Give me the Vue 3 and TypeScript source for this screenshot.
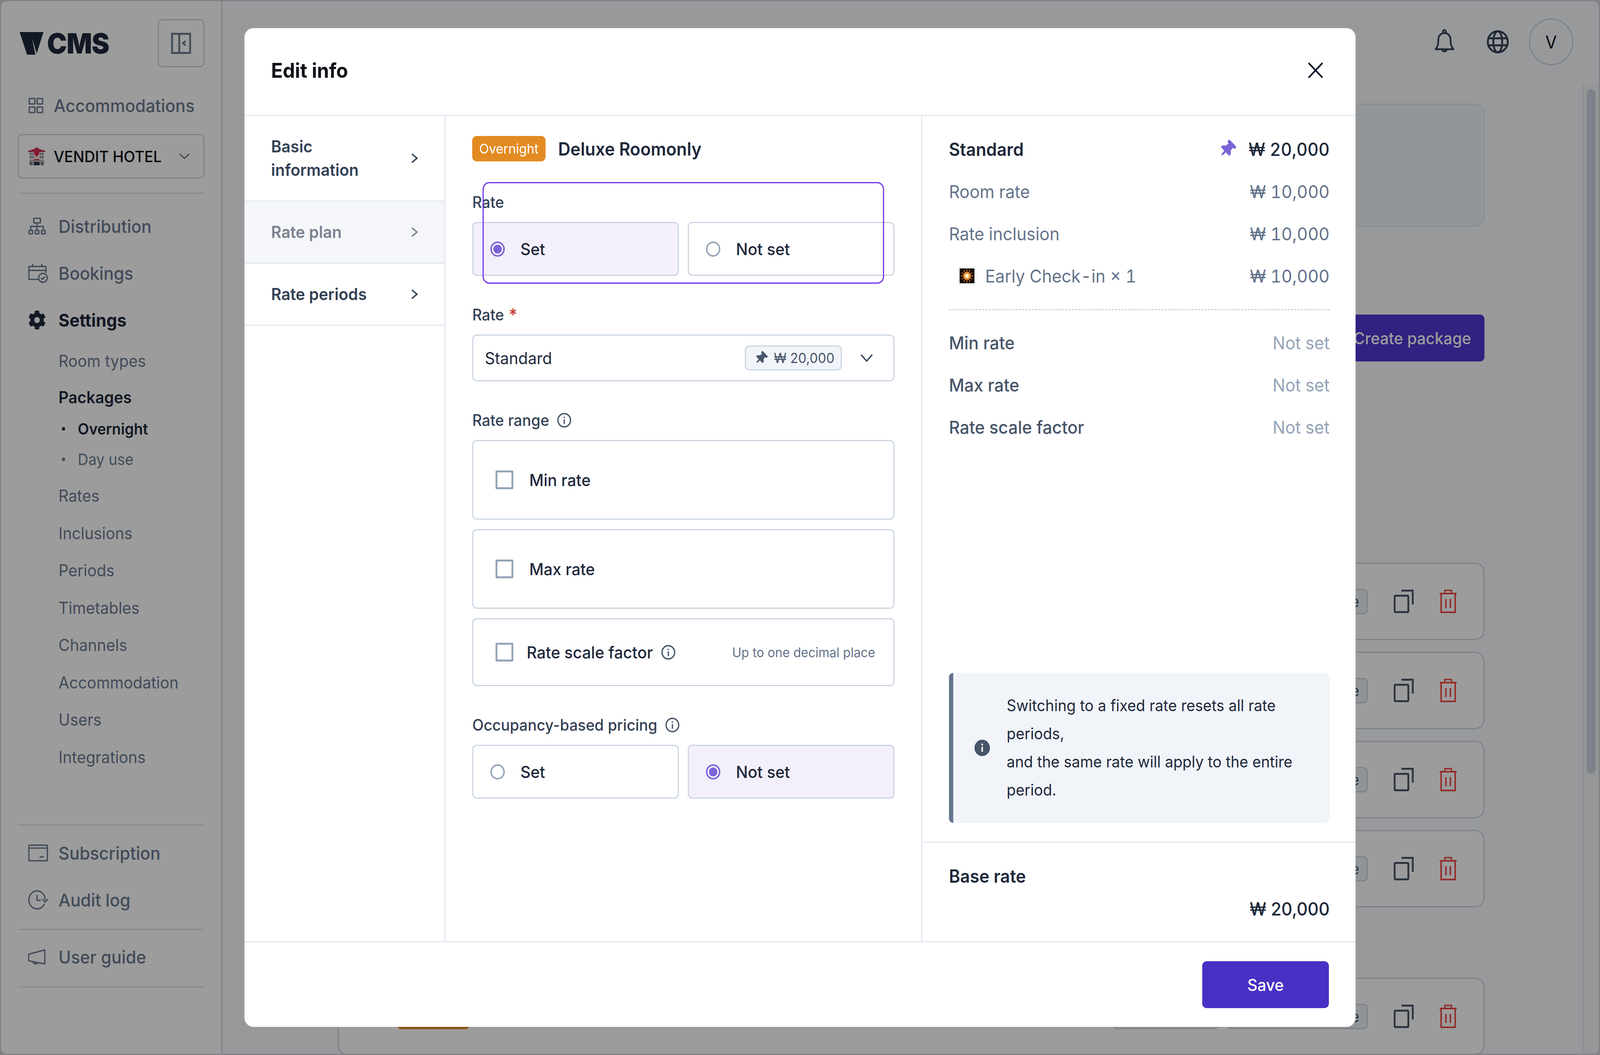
<script setup lang="ts">
// The design is 4320 wide. The sandbox window can be narrower (4096 when probed),
// so squeeze the width to fit instead of cutting off the right edge. 1 at 4320.
const fitX = window.innerWidth / 4320

const subItems = ['Rates', 'Inclusions', 'Periods', 'Timetables', 'Channels', 'Accommodation', 'Users', 'Integrations']
const rateRows = [
  { label: 'Room rate', value: '₩ 10,000' },
  { label: 'Rate inclusion', value: '₩ 10,000' },
]
const limitRows = ['Min rate', 'Max rate', 'Rate scale factor']
const navItems = [
  { label: 'Basic information', active: false },
  { label: 'Rate plan', active: true },
  { label: 'Rate periods', active: false },
]
const rangeBoxes = ['Min rate', 'Max rate']
const PIN = 'M298 214L286 96H328c13 0 24-11 24-24V24c0-13-11-24-24-24H56C43 0 32 11 32 24v48c0 13 11 24 24 24h42L86 214C37 237 0 277 0 328c0 13 11 24 24 24h136v104c0 1 0 2 1 4l24 48c3 6 11 6 14 0l24-48c1-2 1-3 1-4V352h136c13 0 24-11 24-24 0-51-38-91-86-114z'
const GEAR = 'M487.4 315.7l-42.6-24.6c4.3-23.2 4.3-47 0-70.2l42.6-24.6c4.9-2.8 7.1-8.6 5.5-14-11.1-35.6-30-67.8-54.7-94.6-3.8-4.1-10-5.1-14.8-2.3L380.8 110c-17.9-15.4-38.5-27.3-60.8-35.1V25.8c0-5.6-3.9-10.5-9.4-11.7-36.7-8.2-74.3-7.8-109.2 0-5.5 1.2-9.4 6.1-9.4 11.7V75c-22.2 7.9-42.8 19.8-60.8 35.1L88.7 85.5c-4.9-2.8-11-1.9-14.8 2.3-24.7 26.7-43.6 58.9-54.7 94.6-1.7 5.4.6 11.2 5.5 14L67.3 221c-4.3 23.2-4.3 47 0 70.2l-42.6 24.6c-4.9 2.8-7.1 8.6-5.5 14 11.1 35.6 30 67.8 54.7 94.6 3.8 4.1 10 5.1 14.8 2.3l42.6-24.6c17.9 15.4 38.5 27.3 60.8 35.1v49.2c0 5.6 3.9 10.5 9.4 11.7 36.7 8.2 74.3 7.8 109.2 0 5.5-1.2 9.4-6.1 9.4-11.7v-49.2c22.2-7.9 42.8-19.8 60.8-35.1l42.6 24.6c4.9 2.8 11 1.9 14.8-2.3 24.7-26.7 43.6-58.9 54.7-94.6 1.5-5.5-.7-11.3-5.6-14.1zM256 336c-44.1 0-80-35.9-80-80s35.9-80 80-80 80 35.9 80 80-35.9 80-80 80z'
const rays = [0, 30, 60, 90, 120, 150, 180, 210, 240, 270, 300, 330]
</script>

<template>
  <div class="frame">
    <div class="screen" :style="{ transform: `scaleX(${fitX})` }">
      <div class="app">
        <aside class="sidebar">
          <div class="brand">
            <div class="logo">
              <svg class="logo__mark" width="65" height="58" viewBox="0 0 65 58">
                <path d="M0 0H64.500L46 55L33 14L42.500 58H20Z" fill="#1e293b" />
              </svg>
              <span class="logo__text">CMS</span>
            </div>
            <button class="collapse">
              <svg width="54" height="54" viewBox="0 0 54 54" fill="none" stroke="#6b7b92" stroke-width="5">
                <rect x="2.500" y="2.500" width="49" height="49" />
                <path d="M22 2V52" />
                <path d="M39 21L32 26.500L39 32" stroke-width="4.500" />
              </svg>
            </button>
          </div>

          <div class="top-link">
            <svg width="40" height="40" viewBox="0 0 40 40" fill="none" stroke="#6b7b92" stroke-width="3.500">
              <rect x="2" y="2" width="15" height="14" rx="1" />
              <rect x="23" y="2" width="15" height="14" rx="1" />
              <rect x="2" y="24" width="15" height="14" rx="1" />
              <rect x="23" y="24" width="15" height="14" rx="1" />
            </svg>
            <span>Accommodations</span>
          </div>

          <div class="hotel">
            <svg class="hotel__icon" width="46" height="47" viewBox="0 0 46 47">
              <rect x="3" y="9" width="40" height="36" fill="#e9d7dc" />
              <path d="M0 9L14 5L23 0L32 5L46 9V12H0Z" fill="#c9344d" />
              <path d="M23 24C14 17 14 9 19 9C21 9 23 11 23 12C23 11 25 9 27 9C32 9 32 17 23 24Z" fill="#e0244a" />
              <path d="M5 15h4v4H5zM11 15h3v4h-3zM32 15h3v4h-3zM37 15h4v4h-4zM5 23h4v4H5zM11 23h3v4h-3zM32 23h3v4h-3zM37 23h4v4h-4z" fill="#5f7486" />
              <path d="M3 33H43V36H3Z" fill="#b9a7ac" />
              <path d="M15 37H31V46H15Z" fill="#27384a" />
              <path d="M13 33C16 29 30 29 33 33Z" fill="#c9344d" />
              <path d="M4 37h8v9H4zM34 37h8v9h-8z" fill="#70868f" />
            </svg>
            <span class="hotel__name">VENDIT HOTEL</span>
            <svg width="30" height="18" viewBox="0 0 30 18" fill="none" stroke="#6b7b92" stroke-width="3.500">
              <path d="M2 3L15 14L28 3" />
            </svg>
          </div>

          <hr class="rule rule--first" />

          <nav class="menu">
            <div class="menu__row">
              <svg width="48" height="45" viewBox="0 0 48 45" fill="none" stroke="#6b7b92" stroke-width="3.500">
                <rect x="15" y="2" width="18" height="12" rx="1.500" />
                <path d="M24 14V23M7 32V23H41V32M24 23V32" />
                <rect x="2" y="33" width="10" height="9" rx="2" />
                <rect x="19" y="33" width="10" height="9" rx="2" />
                <rect x="36" y="33" width="10" height="9" rx="2" />
              </svg>
              <span>Distribution</span>
            </div>
            <div class="menu__row">
              <svg width="54" height="52" viewBox="0 0 54 52" fill="none" stroke="#6b7b92" stroke-width="3.500">
                <path d="M28 42H2V9H48V25M2 19H48M12 2V11M37 2V11" />
                <circle cx="40" cy="38" r="11.500" />
                <path d="M34.500 38L38.500 42L45.500 35" />
              </svg>
              <span>Bookings</span>
            </div>
            <div class="menu__row menu__row--on">
              <svg width="48" height="50" viewBox="0 0 512 512" fill="#1e293b" preserveAspectRatio="none">
                <path :d="GEAR" />
              </svg>
              <span>Settings</span>
            </div>
            <div class="sub sub--room">Room types</div>
            <div class="sub sub--pack">Packages</div>
            <div class="leaf leaf--on"><i class="leaf__dot"></i>Overnight</div>
            <div class="leaf leaf--off"><i class="leaf__dot"></i>Day use</div>
            <div v-for="item in subItems" :key="item" class="sub">{{ item }}</div>
          </nav>

          <hr class="rule rule--foot" />
          <div class="menu__row">
            <svg width="54" height="44" viewBox="0 0 54 44" fill="none" stroke="#6b7b92" stroke-width="3.500">
              <rect x="2" y="2" width="50" height="40" rx="2" />
              <path d="M2 9.500H52" stroke-width="3" />
              <path d="M31 32H42" />
            </svg>
            <span>Subscription</span>
          </div>
          <div class="menu__row">
            <svg width="54" height="50" viewBox="0 0 54 50" fill="none" stroke="#6b7b92" stroke-width="3.500">
              <path d="M46 25C46 12 36 2 24 2C12 2 2 12 2 25C2 38 12 48 24 48C33 48 40 43 44 35" />
              <path d="M24 12V26H34" />
              <path d="M38 23L46 30L53 23" />
            </svg>
            <span>Audit log</span>
          </div>
          <hr class="rule rule--mid" />
          <div class="menu__row">
            <svg width="48" height="42" viewBox="0 0 48 42" fill="none" stroke="#6b7b92" stroke-width="3.500">
              <path d="M45 3V39L2 31C1 28 1 17 2 14L45 3Z" stroke-linejoin="round" />
              <path d="M13 33C14 40 24 41 26 35" />
            </svg>
            <span>User guide</span>
          </div>
          <hr class="rule rule--last" />
        </aside>

        <div class="main">
          <header class="topbar">
            <svg width="72" height="72" viewBox="0 0 24 24" fill="none" stroke="#334155" stroke-width="1.500" stroke-linejoin="round">
              <path d="M12 4.500a5.500 5.500 0 0 0-5.500 5.500c0 4.500-.8 6.300-2.500 8.300h16c-1.700-2-2.500-3.800-2.500-8.300A5.500 5.500 0 0 0 12 4.500Z" />
              <circle cx="12" cy="3.300" r="1.300" />
              <path d="M9.800 18.500a2.300 2.300 0 0 0 4.400 0" />
            </svg>
            <svg width="72" height="72" viewBox="0 0 72 72" fill="none" stroke="#334155" stroke-width="5">
              <circle cx="36" cy="36" r="27" />
              <ellipse cx="36" cy="36" rx="12" ry="27" />
              <path d="M9 27H63M9 45H63" />
            </svg>
            <div class="avatar">V</div>
          </header>
          <div class="scroll">
            <div class="content">
              <div class="summary"></div>
              <div class="actions"><button class="create">Create package</button></div>
              <div class="cards">
                <div v-for="n in 5" :key="n" class="card" :class="{ 'card--last': n === 5 }">
                  <span class="card__badge"></span>
                  <span class="card__btn card__btn--wide"></span>
                  <span class="card__btn">e</span>
                  <svg width="54" height="60" viewBox="0 0 54 60" fill="none" stroke="#4b5869" stroke-width="5">
                    <rect x="2.500" y="15.500" width="37" height="42" rx="2" />
                    <path d="M21 2.500H51.500V38" />
                  </svg>
                  <svg width="46" height="60" viewBox="0 0 46 60" fill="none" stroke="#ef4444" stroke-width="4">
                    <path d="M0 10H46" />
                    <path d="M14 10V2H32V10" stroke-width="3.500" />
                    <path d="M4 10V58H42V10" />
                    <path d="M17 24V47M29 24V47" />
                  </svg>
                </div>
              </div>
            </div>
            <div class="track"><div class="track__thumb"></div></div>
          </div>
        </div>
      </div>

      <div class="overlay">
        <section class="modal">
          <header class="modal__head">
            <h2 class="modal__title">Edit info</h2>
            <svg width="40" height="40" viewBox="0 0 40 40" fill="none" stroke="#0f172a" stroke-width="4.500" stroke-linecap="round">
              <path d="M2.500 2.500L37.500 37.500M37.500 2.500L2.500 37.500" />
            </svg>
          </header>

          <div class="modal__body">
            <div class="steps">
              <div v-for="item in navItems" :key="item.label" class="step" :class="{ 'step--on': item.active }">
                <span class="step__label">{{ item.label }}</span>
                <svg width="24" height="30" viewBox="0 0 24 30" fill="none" stroke="currentColor" stroke-width="3.500">
                  <path d="M5 4L19 15L5 26" />
                </svg>
              </div>
            </div>

            <div class="form">
              <div class="form__title">
                <span class="tag">Overnight</span>
                <span class="form__name">Deluxe Roomonly</span>
              </div>

              <div class="field field--rate">
                <label class="label">Rate</label>
                <div class="choices">
                  <div class="choice choice--on"><i class="radio radio--on"></i>Set</div>
                  <div class="choice"><i class="radio"></i>Not set</div>
                </div>
                <div class="focus-ring"></div>
              </div>

              <div class="field">
                <label class="label">Rate <em class="label__req">*</em></label>
                <div class="select">
                  <span class="select__value">Standard</span>
                  <span class="chip">
                    <svg width="25" height="33" viewBox="0 0 384 512" fill="#475569" class="pin pin--chip">
                      <path :d="PIN" />
                    </svg>
                    ₩ 20,000
                  </span>
                  <svg class="select__caret" width="34" height="22" viewBox="0 0 34 22" fill="none" stroke="#334155" stroke-width="3.500">
                    <path d="M2 3L17 19L32 3" />
                  </svg>
                </div>
              </div>

              <div class="field">
                <label class="label">
                  Rate range
                  <svg class="info" width="39" height="39" viewBox="0 0 39 39" fill="none" stroke="#475569" stroke-width="3.500">
                    <circle cx="19.500" cy="19.500" r="17" />
                    <path d="M19.500 17V29" />
                    <path d="M19.500 10.500V13.500" stroke-width="4" />
                  </svg>
                </label>
                <div class="ranges">
                  <div v-for="box in rangeBoxes" :key="box" class="range">
                    <i class="check"></i>
                    <span>{{ box }}</span>
                  </div>
                  <div class="range range--scale">
                    <i class="check"></i>
                    <span>Rate scale factor</span>
                    <svg class="info" width="39" height="39" viewBox="0 0 39 39" fill="none" stroke="#475569" stroke-width="3.500">
                      <circle cx="19.500" cy="19.500" r="17" />
                      <path d="M19.500 17V29" />
                      <path d="M19.500 10.500V13.500" stroke-width="4" />
                    </svg>
                    <span class="range__hint">Up to one decimal place</span>
                  </div>
                </div>
              </div>

              <div class="field">
                <label class="label">
                  Occupancy-based pricing
                  <svg class="info" width="39" height="39" viewBox="0 0 39 39" fill="none" stroke="#475569" stroke-width="3.500">
                    <circle cx="19.500" cy="19.500" r="17" />
                    <path d="M19.500 17V29" />
                    <path d="M19.500 10.500V13.500" stroke-width="4" />
                  </svg>
                </label>
                <div class="choices">
                  <div class="choice"><i class="radio"></i>Set</div>
                  <div class="choice choice--on"><i class="radio radio--on"></i>Not set</div>
                </div>
              </div>
            </div>

            <div class="review">
              <div class="review__pane">
                <div class="line line--head">
                  <span>Standard</span>
                  <span class="line__price">
                    <svg width="33" height="44" viewBox="0 0 384 512" fill="#7c63d8" class="pin pin--line">
                      <path :d="PIN" />
                    </svg>
                    ₩ 20,000
                  </span>
                </div>
                <div v-for="row in rateRows" :key="row.label" class="line">
                  <span>{{ row.label }}</span>
                  <span>{{ row.value }}</span>
                </div>
                <div class="line">
                  <span class="line__item">
                    <svg class="spark" width="48" height="48" viewBox="0 0 48 48">
                      <rect x="0.500" y="0.500" width="47" height="47" fill="#fff" stroke="#e2e8f0" />
                      <rect x="4" y="5" width="40" height="38" fill="#120a08" />
                      <g stroke="#e8701f" stroke-width="2">
                        <path v-for="deg in rays" :key="deg" d="M24 24V7" :transform="`rotate(${deg} 24 24)`" />
                      </g>
                      <circle cx="24" cy="24" r="10" fill="#f59a3c" />
                      <circle cx="24" cy="24" r="5" fill="#fff3d6" />
                    </svg>
                    Early Check-in × 1
                  </span>
                  <span>₩ 10,000</span>
                </div>
                <hr class="dash" />
                <div v-for="row in limitRows" :key="row" class="line line--limit">
                  <span>{{ row }}</span>
                  <span class="line__none">Not set</span>
                </div>
                <div class="notice">
                  <svg width="42" height="42" viewBox="0 0 42 42" class="notice__icon">
                    <circle cx="21" cy="21" r="21" fill="#475569" />
                    <rect x="19" y="18" width="4" height="13" rx="1" fill="#fff" />
                    <rect x="19" y="10" width="4" height="5" rx="1" fill="#fff" />
                  </svg>
                  <p class="notice__text">
                    Switching to a fixed rate resets all rate<br />
                    periods,<br />
                    and the same rate will apply to the entire<br />
                    period.
                  </p>
                </div>
              </div>
              <div class="base">
                <div class="base__label">Base rate</div>
                <div class="base__value">₩ 20,000</div>
              </div>
            </div>
          </div>

          <footer class="modal__foot">
            <button class="save">Save</button>
          </footer>
        </section>
      </div>
    </div>
  </div>
</template>

<style>
html,
body {
  margin: 0;
  background: #fff;
  overflow: hidden;
}
</style>

<style scoped>
* {
  box-sizing: border-box;
}

.frame {
  width: 100vw;
  height: 100vh;
  overflow: hidden;
}

.screen {
  position: relative;
  width: 4320px;
  height: 2700px;
  overflow: hidden;
  background: #d1d5db;
  font-family: Inter, "Liberation Sans", sans-serif;
  color: #1e293b;
  transform-origin: left top;
}

.app {
  display: flex;
  width: 100%;
  height: 100%;
  overflow: hidden;
  border: 3px solid #d1d5db;
  border-radius: 18px;
  background: #f9fafd;
}

/* sidebar */
.sidebar {
  display: flex;
  flex-direction: column;
  flex: none;
  width: 597px;
  padding: 46px 45px 0;
  background: #fff;
  border-right: 3px solid #cbd5e1;
}

.brand {
  display: flex;
  align-items: center;
  justify-content: space-between;
  height: 123px;
}

.logo {
  display: flex;
  align-items: center;
  gap: 9px;
  padding-left: 5px;
}

.logo__mark {
  display: block;
}

.logo__text {
  font-size: 72px;
  font-weight: 900;
  line-height: 60px;
  color: #1e293b;
  letter-spacing: -1px;
}

.collapse {
  display: flex;
  align-items: center;
  justify-content: center;
  width: 126px;
  height: 123px;
  padding: 0;
  background: none;
  border: 3px solid #cbd5e1;
  border-radius: 12px;
}

.top-link {
  display: flex;
  align-items: center;
  gap: 28px;
  height: 96px;
  margin-top: 50px;
  padding-left: 29px;
  font-size: 45.500px;
  font-weight: 500;
  color: #6b7b92;
}

.hotel {
  display: flex;
  align-items: center;
  height: 114px;
  margin-top: 25px;
  padding: 0 36px 0 25px;
  border: 3px solid #cbd5e1;
  border-radius: 12px;
}

.hotel__icon {
  flex: none;
}

.hotel__name {
  flex: 1;
  margin-left: 23px;
  font-size: 40px;
  font-weight: 500;
  color: #0b0f18;
}

.rule {
  flex: none;
  width: 100%;
  height: 3px;
  margin: 0;
  border: 0;
  background: #dde3ea;
}

.rule--first {
  margin: 36px 0 23px;
}

.rule--foot {
  margin: 125px 0 10px;
}

.rule--mid {
  margin: 14px 0 9px;
}

.rule--last {
  margin-top: 15px;
}

.menu {
  display: flex;
  flex-direction: column;
}

.menu__row {
  position: relative;
  display: flex;
  align-items: center;
  flex: none;
  height: 120px;
  padding-left: 110px;
  font-size: 45.500px;
  font-weight: 500;
  color: #6b7b92;
}

.menu__row svg {
  position: absolute;
  left: 28px;
  top: 50%;
  transform: translateY(-50%);
}

.menu__row--on {
  font-weight: 700;
  color: #1e293b;
}

.sub {
  display: flex;
  align-items: center;
  height: 95.500px;
  padding-left: 110px;
  font-size: 42px;
  color: #6b7b92;
}

.sub--room {
  height: 88px;
}

.sub--pack {
  height: 98px;
  font-weight: 600;
  color: #1e293b;
}

.leaf {
  position: relative;
  display: flex;
  align-items: center;
  padding-left: 162px;
  font-size: 39.500px;
  color: #6b7b92;
}

.leaf--on {
  height: 66px;
  font-weight: 600;
  color: #1e293b;
}

.leaf--off {
  height: 90px;
}

.leaf__dot {
  position: absolute;
  left: 119px;
  top: 50%;
  width: 9px;
  height: 9px;
  margin-top: -5px;
  border-radius: 50%;
  background: currentColor;
}

/* main page under the dialog */
.main {
  display: flex;
  flex: 1;
  flex-direction: column;
  min-width: 0;
}

.topbar {
  display: flex;
  align-items: center;
  justify-content: flex-end;
  flex: none;
  gap: 72px;
  height: 213px;
  padding: 0 69px 5px 0;
}

.avatar {
  display: flex;
  align-items: center;
  justify-content: center;
  width: 120px;
  height: 120px;
  margin-left: -24px;
  border: 3px solid #cbd5e1;
  border-radius: 50%;
  font-size: 45px;
  color: #0b0f18;
}

.scroll {
  display: flex;
  flex: 1;
  min-height: 0;
}

.content {
  flex: 1;
  min-width: 0;
  padding: 49px 265px 0 312px;
}

.summary {
  height: 315px;
  background: #f1f5f9;
  border: 3px solid #e2e8f0;
  border-radius: 24px;
}

.actions {
  display: flex;
  justify-content: flex-end;
  margin-top: 225px;
}

.create {
  height: 120px;
  padding: 0 36px;
  background: #4d38d1;
  border: 0;
  border-radius: 12px;
  font: 500 42px Inter, sans-serif;
  color: #fff;
}

.cards {
  display: flex;
  flex-direction: column;
  gap: 30px;
  margin-top: 515px;
}

.card {
  display: flex;
  align-items: center;
  flex: none;
  height: 198px;
  padding: 0 72px 0 157px;
  background: #fff;
  border: 3px solid #cbd5e1;
  border-radius: 24px;
}

.card--last {
  margin-top: 150px;
}

.card__badge {
  width: 196px;
  height: 65px;
  margin-right: auto;
  background: #e38b22;
  border-radius: 12px;
}

.card__btn {
  display: flex;
  align-items: center;
  justify-content: flex-end;
  width: 381px;
  height: 65px;
  padding-right: 20px;
  margin-right: 70px;
  background: #eef2f7;
  border: 3px solid #cbd5e1;
  border-radius: 12px;
  font-size: 39px;
  color: #475569;
}

.card__btn--wide {
  width: 283px;
  margin-right: 23px;
}

.card svg + svg {
  margin-left: 70px;
}

.track {
  flex: none;
  width: 44px;
  padding: 12px 9px 0 8px;
  background: #f3f5f8;
  border-left: 3px solid #e2e8f0;
}

.track__thumb {
  width: 24px;
  height: 1751px;
  border-radius: 12px;
  background: #cbd5e1;
}

/* dialog */
.overlay {
  position: absolute;
  inset: 0;
  display: flex;
  align-items: center;
  justify-content: center;
  background: rgba(0, 0, 0, 0.39);
}

.modal {
  display: flex;
  flex-direction: column;
  width: 3000px;
  height: 2556px;
  background: #fff;
  border-radius: 24px;
  overflow: hidden;
}

.modal__head {
  display: flex;
  align-items: center;
  justify-content: space-between;
  flex: none;
  height: 225px;
  padding: 0 88px 6px 72px;
  border-bottom: 3px solid #e2e8f0;
}

.modal__title {
  margin: 0;
  font-size: 52px;
  font-weight: 700;
  color: #0f1218;
}

.modal__body {
  display: flex;
  flex: 1;
  min-height: 0;
}

.steps {
  flex: none;
  width: 543px;
  border-right: 3px solid #e2e8f0;
}

.step {
  display: flex;
  align-items: center;
  justify-content: space-between;
  padding: 48px 69px 48px 72px;
  border-bottom: 3px solid #e2e8f0;
  font-size: 42.500px;
  font-weight: 600;
  line-height: 60px;
  color: #334155;
}

.step__label {
  width: 300px;
}

.step--on {
  background: #f5f6f9;
  color: #7b8290;
}

.form {
  flex: none;
  width: 1287px;
  padding: 51px 72px 0;
  border-right: 3px solid #e2e8f0;
}

.form__title {
  display: flex;
  align-items: center;
  gap: 34px;
}

.tag {
  display: flex;
  align-items: center;
  justify-content: center;
  width: 198px;
  height: 65px;
  background: #e38b22;
  border-radius: 12px;
  font-size: 34.500px;
  color: #fff;
}

.form__name {
  font-size: 46px;
  font-weight: 600;
  color: #1e293b;
}

.field {
  position: relative;
  margin-top: 69px;
}

.field--rate {
  margin-top: 74px;
}

.label {
  display: flex;
  align-items: center;
  gap: 21px;
  height: 60px;
  margin-bottom: 21px;
  font-size: 40.300px;
  font-weight: 500;
  color: #334155;
}

.label__req {
  margin-left: -8px;
  font-style: normal;
  font-size: 44px;
  color: #c0392b;
}

.choices {
  display: grid;
  grid-template-columns: 1fr 1fr;
  gap: 24px;
}

.choice {
  display: flex;
  align-items: center;
  gap: 42px;
  height: 138px;
  padding-left: 46px;
  background: #fff;
  border: 3px solid #cbd5e1;
  border-radius: 12px;
  font-size: 42.500px;
  font-weight: 500;
  color: #1e293b;
}

.choice--on {
  background: #f3f0fc;
}

.radio {
  flex: none;
  width: 39px;
  height: 39px;
  border: 4px solid #94a3b8;
  border-radius: 50%;
  background: #fff;
}

.radio--on {
  border-color: #7c63d8;
  background: #7c63d8;
  box-shadow: inset 0 0 0 4px #fff;
}

.focus-ring {
  position: absolute;
  left: 28px;
  top: -21px;
  width: 1084px;
  height: 260px;
  border: 3px solid #6c2fe0;
  border-radius: 18px;
  pointer-events: none;
}

.select {
  display: flex;
  align-items: center;
  height: 120px;
  padding: 0 55px 0 31px;
  border: 3px solid #cbd5e1;
  border-radius: 12px;
  font-size: 42.500px;
  color: #1e293b;
}

.select__value {
  flex: 1;
}

.chip {
  display: flex;
  align-items: center;
  gap: 17px;
  height: 64px;
  padding: 0 17px 0 23px;
  background: #f1f5f9;
  border: 3px solid #cbd5e1;
  border-radius: 12px;
  font-size: 35.500px;
  color: #475569;
}

.pin {
  flex: none;
  transform: rotate(45deg);
}

.pin--chip {
  margin: 0 5px;
}

.pin--line {
  margin: 0 7px;
}

.select__caret {
  margin-left: 50px;
}

.ranges {
  display: flex;
  flex-direction: column;
  gap: 24px;
}

.range {
  display: flex;
  align-items: center;
  gap: 43px;
  height: 204px;
  padding: 0 49px 0 60px;
  border: 3px solid #cbd5e1;
  border-radius: 12px;
  font-size: 42.500px;
  font-weight: 500;
  color: #1e293b;
}

.range--scale {
  gap: 36px;
  height: 174px;
}

.range--scale .info {
  margin-left: -14px;
}

.range__hint {
  margin-left: auto;
  font-size: 33.800px;
  font-weight: 400;
  color: #64748b;
}

.check {
  flex: none;
  width: 48px;
  height: 48px;
  border: 5px solid #94a3b8;
  border-radius: 3px;
  background: #fff;
}

.review {
  display: flex;
  flex: 1;
  flex-direction: column;
  min-width: 0;
}

.review__pane {
  display: flex;
  flex: 1;
  flex-direction: column;
  padding: 31px 70px 48px 72px;
  border-bottom: 3px solid #e2e8f0;
}

.line {
  display: flex;
  align-items: center;
  justify-content: space-between;
  flex: none;
  height: 108px;
  font-size: 45.500px;
  font-variant-numeric: tabular-nums;
  color: #64748b;
}

.line--head {
  font-size: 46px;
  font-weight: 600;
  color: #1e293b;
}

.line--limit {
  font-weight: 500;
  color: #475569;
}

.line__price {
  display: flex;
  align-items: center;
  gap: 34px;
  font-weight: 500;
}

.line__item {
  display: flex;
  align-items: center;
  gap: 25px;
  padding-left: 25px;
}

.line__none {
  font-weight: 400;
  color: #94a3b8;
}

.dash {
  flex: none;
  width: 100%;
  height: 0;
  margin: 31px 0 29px;
  border: 0;
  border-top: 3px dashed #cbd5e1;
}

.notice {
  display: flex;
  align-items: center;
  gap: 45px;
  margin-top: auto;
  padding: 48px 36px 48px 57px;
  background: #f1f4f9;
  border-left: 12px solid #64748b;
  border-radius: 12px;
}

.notice__icon {
  flex: none;
}

.notice__text {
  margin: 0;
  font-size: 40.300px;
  line-height: 72px;
  color: #1e293b;
}

.base {
  flex: none;
  height: 252px;
  padding: 49px 70px 0 72px;
}

.base__label {
  font-size: 46px;
  font-weight: 600;
  line-height: 72px;
  color: #1e293b;
}

.base__value {
  margin-top: 12px;
  font-size: 46px;
  font-weight: 500;
  line-height: 72px;
  text-align: right;
  color: #1e293b;
}

.modal__foot {
  display: flex;
  justify-content: flex-end;
  flex: none;
  height: 219px;
  padding: 48px 72px 0;
  border-top: 3px solid #e2e8f0;
}

.save {
  width: 342px;
  height: 120px;
  background: #4830c4;
  border: 0;
  border-radius: 12px;
  font: 500 42px Inter, sans-serif;
  color: #fff;
}
</style>
